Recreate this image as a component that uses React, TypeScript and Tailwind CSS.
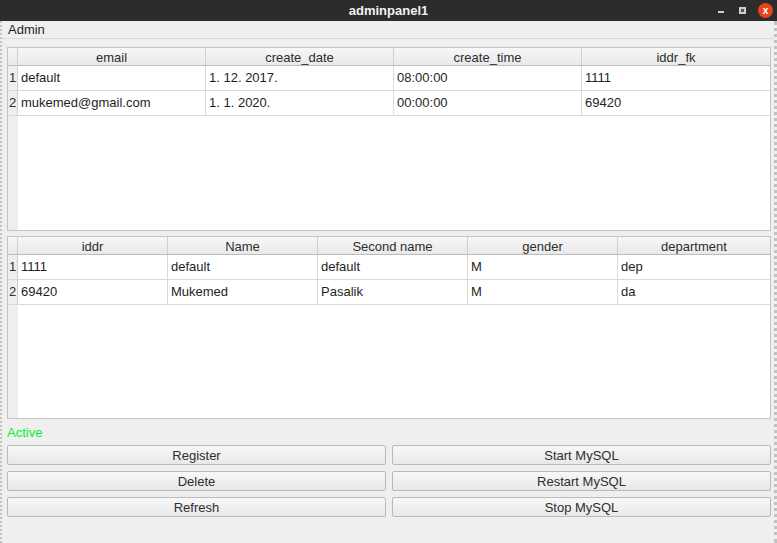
import React from "react";

interface TableProps {
  columns: string[];
  widths: string[];
  rows: string[][];
  height: string;
}

const firstRows = [
  ["default", "1. 12. 2017.", "08:00:00", "1111"],
  ["mukemed@gmail.com", "1. 1. 2020.", "00:00:00", "69420"],
];

const secondRows = [
  ["1111", "default", "default", "M", "dep"],
  ["69420", "Mukemed", "Pasalik", "M", "da"],
];

const DataTable: React.FC<TableProps> = ({ columns, widths, rows, height }) => {
  return (
    <div className={`${height} flex flex-col border border-[#c4c4c4] bg-white`}>
      <div className="flex h-[18px] border-b border-[#bdbdbd] bg-gradient-to-b from-[#f7f7f7] to-[#e9e9e9]">
        <div className="w-[10px] shrink-0 border-r border-[#cfcfcf]" />
        {columns.map((col, i) => (
          <div
            key={col}
            className={`${widths[i]} flex items-center justify-center pt-[1px] text-[13px] leading-none text-[#2e2e2e] ${
              i < columns.length - 1 ? "border-r border-[#cfcfcf]" : ""
            }`}
          >
            {col}
          </div>
        ))}
      </div>
      <div className="flex flex-1 flex-col">
        {rows.map((row, r) => (
          <div key={r} className="flex h-[25px] border-b border-[#d9d9d9]">
            <div className="flex w-[10px] shrink-0 items-center justify-center border-r border-[#cfcfcf] bg-[#eeeeee] text-[13px] text-[#2e2e2e]">
              {r + 1}
            </div>
            {row.map((cell, i) => (
              <div
                key={i}
                className={`${widths[i]} flex items-center pl-[3px] text-[13px] text-[#1e1e1e] ${
                  i < row.length - 1 ? "border-r border-[#d9d9d9]" : ""
                }`}
              >
                {cell}
              </div>
            ))}
          </div>
        ))}
        <div className="flex flex-1">
          <div className="w-[10px] shrink-0 bg-[#eeeeee]" />
        </div>
      </div>
    </div>
  );
};

const Button: React.FC<{ label: string }> = ({ label }) => (
  <button className="flex h-[20px] flex-1 items-center justify-center rounded-[2px] border border-[#b9b9b9] bg-gradient-to-b from-[#f8f8f8] to-[#e8e8e8] text-[13px] leading-none text-[#2e2e2e]">
    {label}
  </button>
);

export default function App() {
  return (
    <div
      className="flex h-[543px] w-[777px] flex-col overflow-hidden bg-[#efefef]"
      style={{ fontFamily: '"Liberation Sans", Arial, sans-serif' }}
    >
      {/* title bar */}
      <div className="relative flex h-[21px] shrink-0 items-center justify-center bg-[#2c2c2c]">
        <span className="text-[13px] font-bold text-[#f2f2f2]">adminpanel1</span>
        <div className="absolute right-[4px] top-0 flex h-[21px] items-center">
          <span className="mt-[3px] h-[2px] w-[6px] bg-[#cfcfcf]" />
          <span className="ml-[15px] h-[7px] w-[7px] border-2 border-[#cfcfcf] bg-[#555]" />
          <span className="ml-[12px] flex h-[15px] w-[15px] items-center justify-center rounded-full bg-[#e9431d] text-[10px] font-bold leading-none text-white">
            x
          </span>
        </div>
      </div>

      <div className="flex flex-1 flex-col border-l-2 border-r-[3px] border-dotted border-[#c2c2c2]">
        {/* menu bar */}
        <div className="flex h-[18px] shrink-0 items-center border-b border-[#dadada] pl-[6px] pr-[2px] text-[13px] text-[#1e1e1e]">
          Admin
        </div>

        <div className="flex flex-1 flex-col pl-[5px] pr-[3px] pt-[8px]">
          <DataTable
            columns={["email", "create_date", "create_time", "iddr_fk"]}
            widths={["w-[188px]", "w-[188px]", "w-[188px]", "flex-1"]}
            rows={firstRows}
            height="h-[184px]"
          />
          <div className="h-[5px]" />
          <DataTable
            columns={["iddr", "Name", "Second name", "gender", "department"]}
            widths={["w-[150px]", "w-[150px]", "w-[150px]", "w-[150px]", "flex-1"]}
            rows={secondRows}
            height="h-[183px]"
          />

          <div className="mt-[6px] flex h-[15px] items-center text-[13px] text-[#00f030]">Active</div>

          <div className="mt-[5px] flex flex-col gap-[6px]">
            <div className="flex gap-[6px]">
              <Button label="Register" />
              <Button label="Start MySQL" />
            </div>
            <div className="flex gap-[6px]">
              <Button label="Delete" />
              <Button label="Restart MySQL" />
            </div>
            <div className="flex gap-[6px]">
              <Button label="Refresh" />
              <Button label="Stop MySQL" />
            </div>
          </div>
        </div>
      </div>
    </div>
  );
}
